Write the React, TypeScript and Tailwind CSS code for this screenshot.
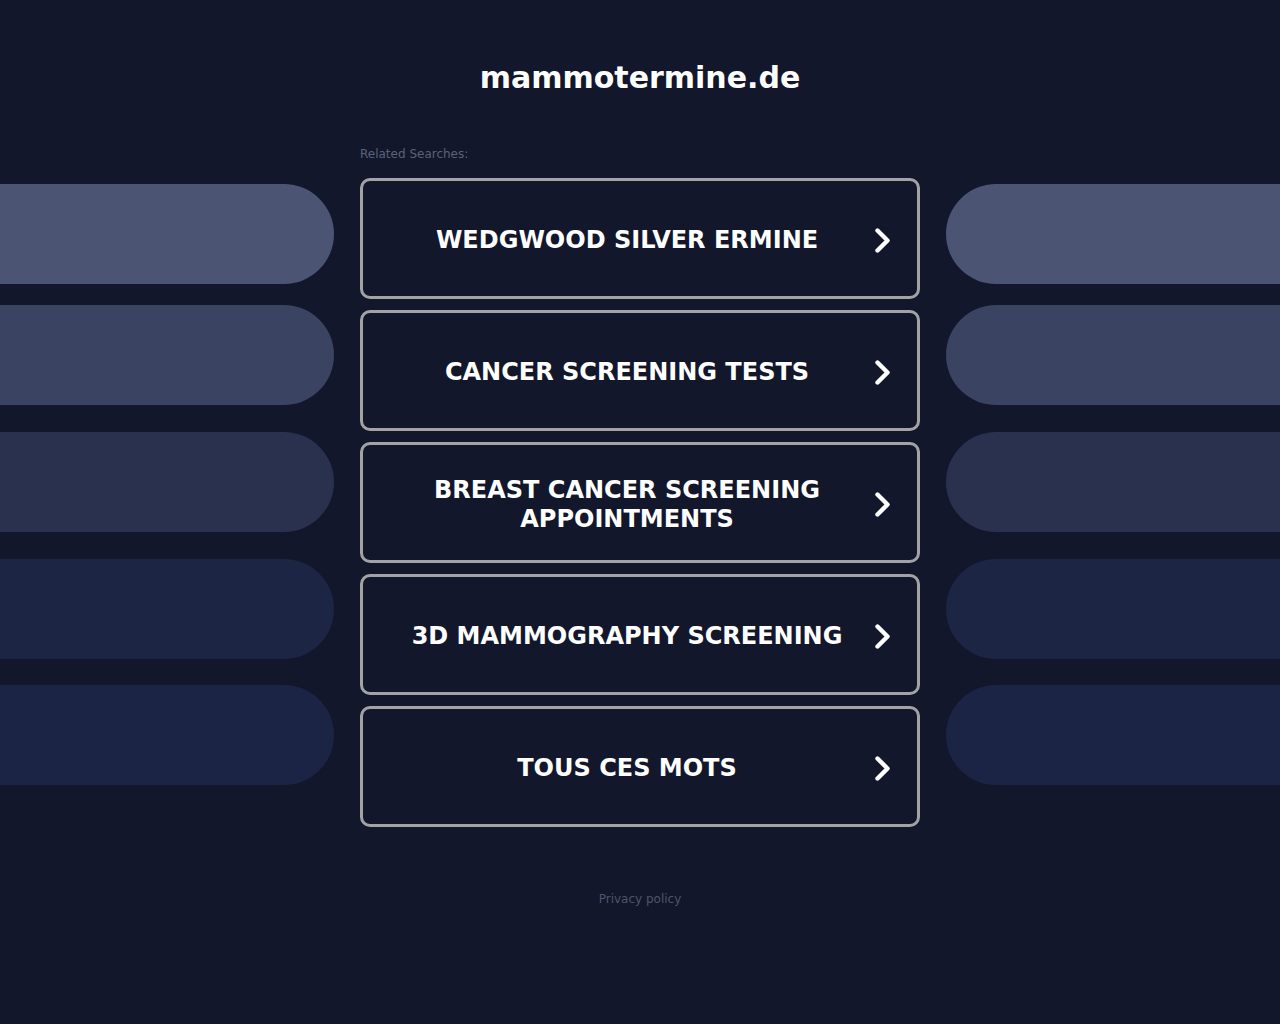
const buscas = [
  'WEDGWOOD SILVER ERMINE',
  'CANCER SCREENING TESTS',
  'BREAST CANCER SCREENING APPOINTMENTS',
  '3D MAMMOGRAPHY SCREENING',
  'TOUS CES MOTS',
];

function Pilulas({ lado }: { lado: 'esq' | 'dir' }) {
  const arredondado = lado === 'esq' ? 'rounded-r-[50px]' : 'rounded-l-[50px]';
  return (
    <div className="flex-1 flex flex-col pt-[38px]">
      <div className={`h-[100px] bg-[#4b5573] ${arredondado}`} />
      <div className={`h-[100px] mt-[21px] bg-[#3a4361] ${arredondado}`} />
      <div className={`h-[100px] mt-[27px] bg-[#29314f] ${arredondado}`} />
      <div className={`h-[100px] mt-[27px] bg-[#1d2545] ${arredondado}`} />
      <div className={`h-[100px] mt-[26px] bg-[#1b2444] ${arredondado}`} />
    </div>
  );
}

function Seta() {
  return (
    <svg viewBox="0 0 26 26" className="w-[26px] h-[26px] shrink-0" fill="none">
      <path d="M10.5 2.5 L20.5 12.5 L10.5 22.5" stroke="white" strokeWidth="4.4" strokeLinecap="round" strokeLinejoin="round" />
    </svg>
  );
}

function App() {
  return (
    <div className="min-h-screen bg-[#12172c] font-['DejaVu_Sans',sans-serif]">
      <h1 className="pt-[60px] text-center text-[30px] leading-[36px] font-bold text-white">
        mammotermine.de
      </h1>

      <div className="flex gap-[26px] mt-[50px]">
        <Pilulas lado="esq" />

        <div className="w-[560px] flex flex-col">
          <p className="text-[12px] leading-[16px] text-[#5a6279]">Related Searches:</p>
          <div className="mt-[16px] flex flex-col gap-[11px]">
            {buscas.map((texto) => (
              <a
                key={texto}
                href="#"
                className="h-[121px] flex items-center px-6 pt-1 border-[3px] border-[#a3a3a6] rounded-[10px] text-white">
                <span className="flex-1 text-center text-[24px] leading-[29px] font-bold">{texto}</span>
                <Seta />
              </a>
            ))}
          </div>
        </div>

        <Pilulas lado="dir" />
      </div>

      <p className="mt-[64px] text-center text-[12px] leading-[16px] text-[#4d556b]">Privacy policy</p>
    </div>
  );
}

export default App;
